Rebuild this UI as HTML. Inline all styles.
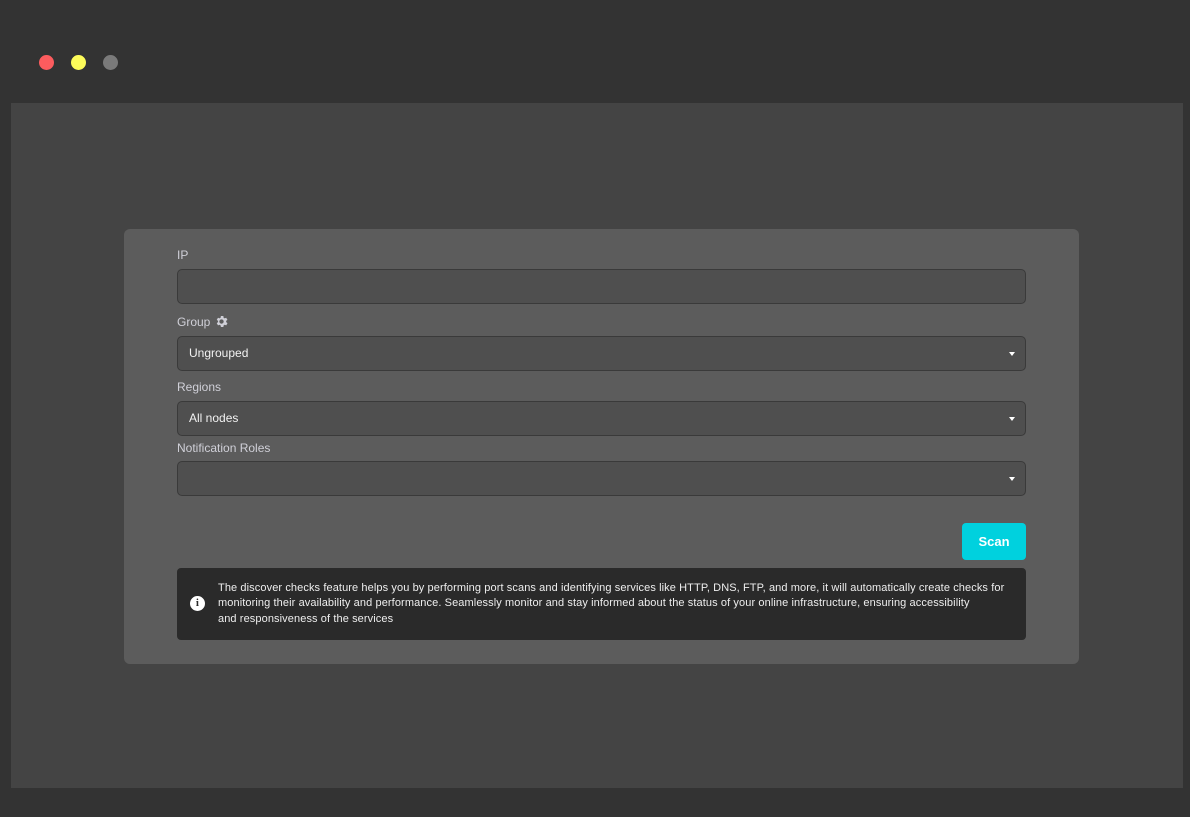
<!DOCTYPE html>
<html><head><meta charset="utf-8"><style>
*{box-sizing:border-box;margin:0;padding:0}
body{width:1190px;height:817px;background:#333333;position:relative;overflow:hidden;font-family:"Liberation Sans",sans-serif}
.dot{position:absolute;top:55px;width:15px;height:15px;border-radius:50%}
.panel{position:absolute;left:11px;top:103px;width:1172px;height:685px;background:#444444}
.card{position:absolute;left:124px;top:229px;width:955px;height:435px;background:#5c5c5c;border-radius:6px}
.lbl{position:absolute;left:53px;font-size:12px;color:#d0d0d8}
.inp{position:absolute;left:53px;width:849px;height:35px;background:#4f4f4f;border:1px solid #3a3a3a;border-radius:5px;font-size:12px;color:#f2f2f2;padding-left:11px;line-height:33px}
.car{position:absolute;right:10px;top:15px;width:0;height:0;border-left:3.5px solid transparent;border-right:3.5px solid transparent;border-top:4px solid #fff}
.btn{position:absolute;left:838px;top:294px;width:64px;height:37px;background:#00d1de;border-radius:4px;color:#fff;font-size:13px;font-weight:bold;text-align:center;line-height:37px}
.info{position:absolute;left:53px;top:339px;width:849px;height:72px;background:#2a2a2a;border-radius:4px;color:#eeeeee;font-size:11px;letter-spacing:0.1px;line-height:15.3px;padding:13px 0 0 41px;white-space:nowrap;overflow:hidden}
.ic{position:absolute;left:13px;top:28px;width:15px;height:15px;border-radius:50%;background:#fff;color:#2a2a2a;font-family:"Liberation Serif",serif;font-weight:bold;font-size:11px;line-height:15px;text-align:center}
</style></head><body>
<div class="dot" style="left:39px;background:#fc5c5e"></div>
<div class="dot" style="left:71px;background:#fdfc5a"></div>
<div class="dot" style="left:103px;background:#7a7a7a"></div>
<div class="panel"></div>
<div class="card">
<div class="lbl" style="top:19px">IP</div>
<div class="inp" style="top:40px"></div>
<div class="lbl" style="top:85px">Group <svg width="15" height="15" viewBox="0 0 24 24" style="vertical-align:-3px"><path fill="#d0d0d8" d="M19.4 13a7.5 7.5 0 000-2l2.1-1.6-2-3.5-2.5 1a7.6 7.6 0 00-1.7-1L15 3.2h-4l-.4 2.7a7.6 7.6 0 00-1.7 1l-2.5-1-2 3.5L6.5 11a7.5 7.5 0 000 2l-2.1 1.6 2 3.5 2.5-1a7.6 7.6 0 001.7 1l.4 2.7h4l.4-2.7a7.6 7.6 0 001.7-1l2.5 1 2-3.5zM12 15.5a3.5 3.5 0 110-7 3.5 3.5 0 010 7z"/></svg></div>
<div class="inp" style="top:107px">Ungrouped<div class="car"></div></div>
<div class="lbl" style="top:151px">Regions</div>
<div class="inp" style="top:172px">All nodes<div class="car"></div></div>
<div class="lbl" style="top:212px">Notification Roles</div>
<div class="inp" style="top:232px"><div class="car"></div></div>
<div class="btn">Scan</div>
<div class="info"><div class="ic">i</div>The discover checks feature helps you by performing port scans and identifying services like HTTP, DNS, FTP, and more, it will automatically create checks for<br>monitoring their availability and performance. Seamlessly monitor and stay informed about the status of your online infrastructure, ensuring accessibility<br>and responsiveness of the services</div>
</div>
</body></html>
